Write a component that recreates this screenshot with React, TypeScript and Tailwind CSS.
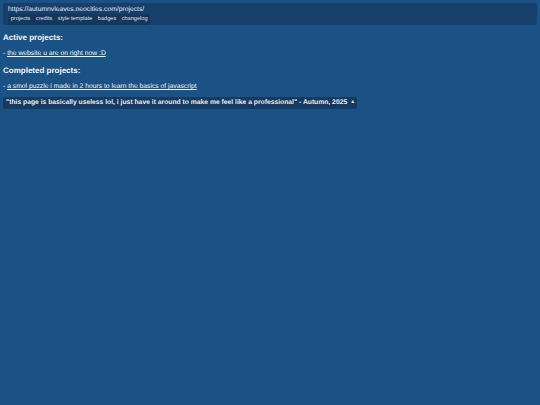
const links = ["projects", "credits", "style template", "badges", "changelog"];

function Section({ title, link }: { title: string; link: string }) {
  return (
    <div>
      <h2 className="text-[8px] font-bold leading-[11px] text-[#f0f4f8]">{title}</h2>
      <p className="mt-[6px] text-[6.75px] leading-[9px] text-[#eef3f7]">
        - <a className="underline">{link}</a>
      </p>
    </div>
  );
}

export default function App() {
  return (
    <div className="min-h-[405px] bg-[#1b5285] px-[3px] pt-[3px] font-['Liberation_Sans',Arial,sans-serif] antialiased [text-rendering:geometricPrecision]">
      <header className="h-[22px] w-[534px] rounded-[2px] bg-[#173f6b] pl-[5px] pt-[2px]">
        <div className="text-[6.75px] leading-[9px] text-[#e4ebf2]">https://autumnvleaves.neocities.com/projects/</div>
        <nav className="flex">
          {links.map((l) => (
            <a key={l} className="bg-[#16365c] px-[2.75px] py-[2px] text-[5.6px] leading-[7px] text-[#d8e2ec]">
              {l}
            </a>
          ))}
        </nav>
      </header>
      <main className="mt-[7px] flex flex-col gap-[7px]">
        <Section title="Active projects:" link="the website u are on right now :D" />
        <Section title="Completed projects:" link="a smol puzzle i made in 2 hours to learn the basics of javascript" />
      </main>
      <div className="mt-[6px] flex h-[12px] w-fit items-center gap-[3px] rounded-[2px] bg-[#173a60] pl-[3px] pr-[2px] text-[6.75px] font-bold text-[#e8eef4]">
        <span>"this page is basically useless lol, i just have it around to make me feel like a professional" - Autumn, 2025</span>
        <span className="text-[5px] font-normal">▲</span>
      </div>
    </div>
  );
}
